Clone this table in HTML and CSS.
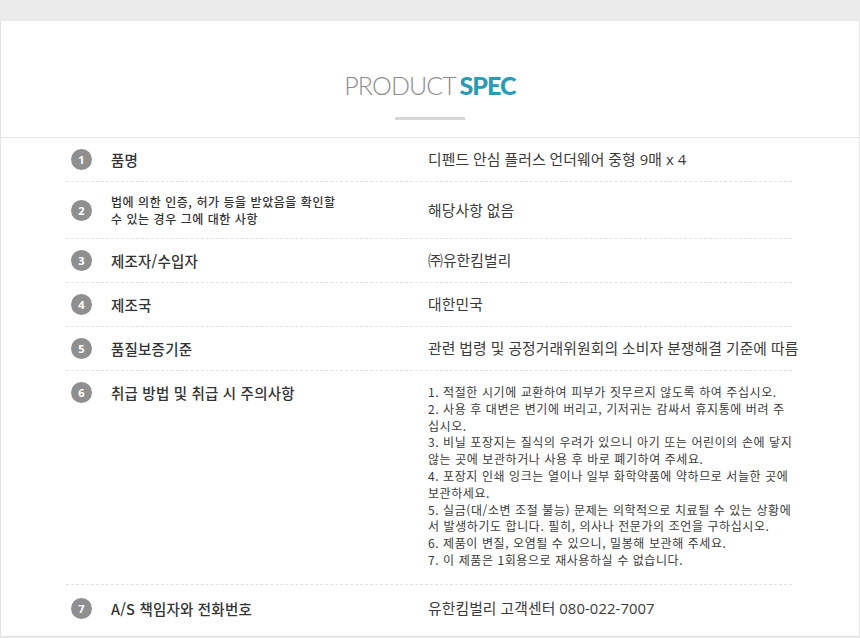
FILE: index.html
```html
<!DOCTYPE html>
<html lang="ko">
<head>
<meta charset="utf-8">
<title>Product Spec</title>
<link rel="stylesheet" href="styles.css">
</head>
<body>
<div class="panel">
  <header class="head">
    <h1 class="title"><span class="light">PRODUCT</span> <span class="bold">SPEC</span></h1>
    <div class="bar"></div>
  </header>
  <ul class="spec">
    <li class="row">
      <span class="num">1</span>
      <span class="label">품명</span>
      <span class="value">디펜드 안심 플러스 언더웨어 중형 9매 x 4</span>
    </li>
    <li class="row">
      <span class="num">2</span>
      <span class="label label-small">법에 의한 인증, 허가 등을 받았음을 확인할<br>수 있는 경우 그에 대한 사항</span>
      <span class="value">해당사항 없음</span>
    </li>
    <li class="row">
      <span class="num">3</span>
      <span class="label">제조자/수입자</span>
      <span class="value">㈜유한킴벌리</span>
    </li>
    <li class="row">
      <span class="num">4</span>
      <span class="label">제조국</span>
      <span class="value">대한민국</span>
    </li>
    <li class="row">
      <span class="num">5</span>
      <span class="label">품질보증기준</span>
      <span class="value">관련 법령 및 공정거래위원회의 소비자 분쟁해결 기준에 따름</span>
    </li>
    <li class="row row-top">
      <span class="num">6</span>
      <span class="label">취급 방법 및 취급 시 주의사항</span>
      <span class="value value-small">1. 적절한 시기에 교환하여 피부가 짓무르지 않도록 하여 주십시오.<br>2. 사용 후 대변은 변기에 버리고, 기저귀는 감싸서 휴지통에 버려 주<br>십시오.<br>3. 비닐 포장지는 질식의 우려가 있으니 아기 또는 어린이의 손에 닿지<br>않는 곳에 보관하거나 사용 후 바로 폐기하여 주세요.<br>4. 포장지 인쇄 잉크는 열이나 일부 화학약품에 약하므로 서늘한 곳에<br>보관하세요.<br>5. 실금(대/소변 조절 불능) 문제는 의학적으로 치료될 수 있는 상황에<br>서 발생하기도 합니다. 필히, 의사나 전문가의 조언을 구하십시오.<br>6. 제품이 변질, 오염될 수 있으니, 밀봉해 보관해 주세요.<br>7. 이 제품은 1회용으로 재사용하실 수 없습니다.</span>
    </li>
    <li class="row row-last">
      <span class="num">7</span>
      <span class="label">A/S 책임자와 전화번호</span>
      <span class="value">유한킴벌리 고객센터 080-022-7007</span>
    </li>
  </ul>
</div>
</body>
</html>
```

FILE: styles.css
```css
* { box-sizing: border-box; }
html, body { margin: 0; padding: 0; }
body {
  background: #ebebeb;
  font-family: "Noto Sans CJK KR", "Noto Sans", sans-serif;
  color: #333;
}
.panel {
  margin-top: 21px;
  background: #fff;
  border-left: 1px solid #e3e3e3;
  border-right: 1px solid #e3e3e3;
  border-bottom: 1px solid #e3e3e3;
  height: 616px;
}
.head {
  border-bottom: 1px solid #e5e5e5;
  height: 117px;
  padding-top: 49px;
  display: flex;
  flex-direction: column;
  align-items: center;
}
.title {
  margin: 0;
  font-family: Lato, "Open Sans", sans-serif;
  font-size: 25px;
  line-height: 30px;
  font-weight: 400;
  letter-spacing: -0.9px;
  word-spacing: -2px;
}
.title .light { color: #8e8e8e; font-weight: 300; }
.title .bold { color: #2a9ab7; font-weight: 900; }
.bar {
  margin-top: 17px;
  width: 70px;
  height: 3px;
  background: #d6d6d6;
}
.spec {
  list-style: none;
  margin: 0 0 0 65px;
  padding: 0;
  width: 726px;
}
.row {
  display: flex;
  align-items: center;
  padding: 11px 0;
  border-bottom: 1px dashed #e2e2e2;
}
.row-top { align-items: flex-start; padding-bottom: 15px; }
.row-last { border-bottom: none; padding-top: 13px; }
.num {
  flex: none;
  width: 21px;
  height: 21px;
  margin-left: 5px;
  border-radius: 50%;
  background: #8f8f8f;
  color: #fff;
  font-family: "Open Sans", sans-serif;
  font-size: 11px;
  font-weight: 700;
  line-height: 21px;
  text-align: center;
}
.label {
  flex: none;
  width: 317px;
  margin-left: 19px;
  font-size: 14.5px;
  line-height: 21px;
  font-weight: 500;
  letter-spacing: 0.2px;
  color: #333;
}
.label-small {
  font-size: 12px;
  line-height: 17px;
  letter-spacing: 0.55px;
}
.value {
  flex: 1;
  font-family: "Open Sans", "Noto Sans CJK KR", sans-serif;
  font-size: 14.8px;
  line-height: 21px;
  letter-spacing: 0.1px;
  color: #3a3a3a;
  white-space: nowrap;
}
.value-small {
  font-family: "Noto Sans CJK KR", "Noto Sans", sans-serif;
  font-size: 12px;
  line-height: 16.8px;
  letter-spacing: 0.58px;
  padding-top: 2px;
}
```
